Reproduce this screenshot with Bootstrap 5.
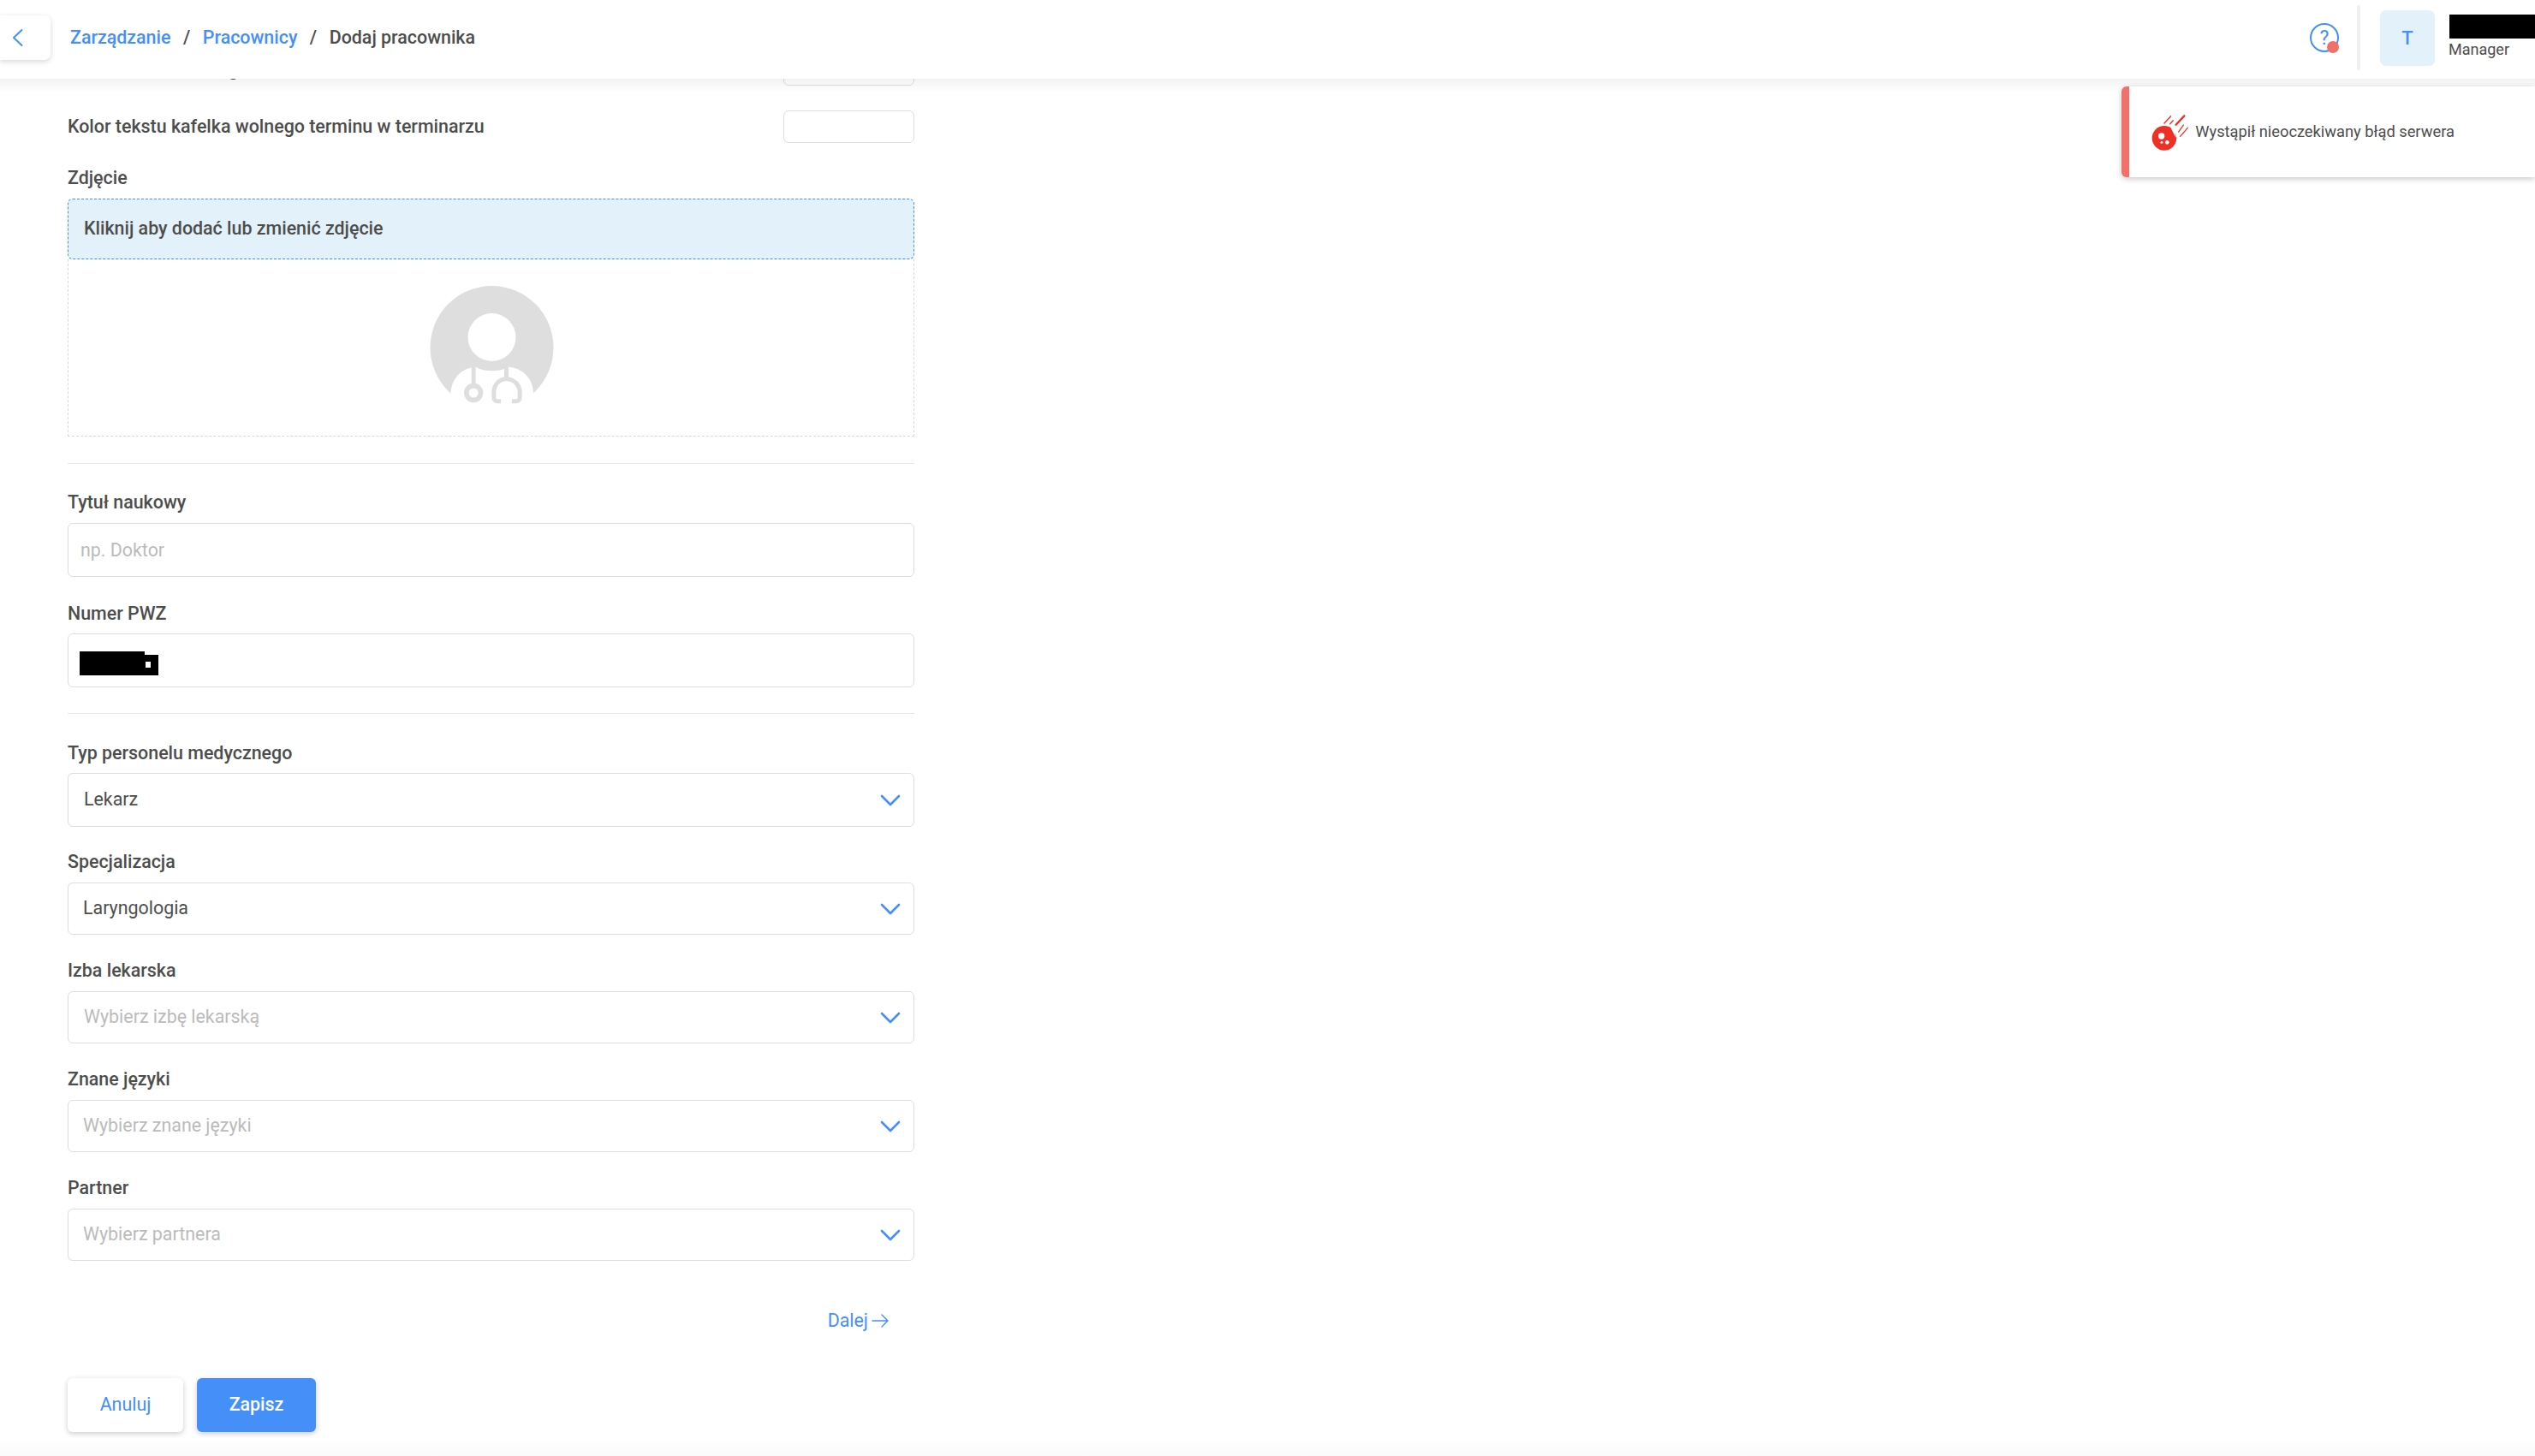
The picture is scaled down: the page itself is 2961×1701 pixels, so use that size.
<!DOCTYPE html>
<html lang="pl">
<head>
<meta charset="utf-8">
<title>Dodaj pracownika</title>
<link href="https://cdn.jsdelivr.net/npm/bootstrap@5.3.0/dist/css/bootstrap.min.css" rel="stylesheet">
<style>
html,body{height:100%}
body{font-family:Roboto,"Liberation Sans",sans-serif;color:#4d4d4d;background:#fff;overflow:hidden;font-size:21.4px}
.shell{height:1701px}
.topbar{height:92px;padding-bottom:4px;background:#fff;position:relative;z-index:5}
.topbar::after{content:"";position:absolute;left:0;right:0;top:100%;height:16px;background:linear-gradient(rgba(0,0,0,.05),rgba(0,0,0,0))}
.backbtn{width:59px;height:52px;background:#fff;border-radius:0 7px 7px 0;box-shadow:0 2px 6px rgba(0,0,0,.16);padding-left:13px}
.topbar .breadcrumb{margin:0 0 0 23px;font-size:21.4px;font-weight:500;--bs-breadcrumb-divider-color:#4d4d4d;--bs-breadcrumb-item-active-color:#4d4d4d;--bs-breadcrumb-item-padding-x:14.5px}
.topbar a,.nextlink{color:#448ff8;text-decoration:none}
.helpbox{margin-right:20px;width:36px;height:36px}
.vsep{width:4px;height:76px;background:#efefef;border-radius:2px}
.avatarbox{width:64px;height:65px;background:#e3f1fa;border-radius:7px;margin-left:23px;color:#448ff8;font-size:22px;font-weight:500}
.userbox{margin-left:16px;width:101px;align-self:flex-start;padding-top:11px}
.redact{height:28px;margin-left:1px;background:#000}
.rolename{font-size:18px;line-height:26px}
.alertbox{position:absolute;top:101px;right:0;width:483px;height:106px;background:#fff;border-left:9px solid #f0706a;border-radius:6px 0 0 6px;box-shadow:0 2px 7px rgba(0,0,0,.22);z-index:6;padding-left:26px;font-size:18.3px}
.formarea{height:1588px;overflow:hidden}
.formcol{width:989px;margin-left:79px;margin-top:-30px}
.colorrow{height:38px;margin-bottom:29px}
.colorrow span{font-size:21.4px;font-weight:500}
.swatch{width:153px;height:38px;border:1px solid #ddd;border-radius:6px;background:#fff}
.fieldlabel{display:block;font-size:21.4px;font-weight:500;line-height:24px;margin:0}
.uploadhead{height:71px;margin-top:12px;background:#e3f1fa;border:1px dashed #448ff8;border-radius:6px;padding-left:18px;font-size:21.4px;font-weight:500}
.uploadbody{height:207px;border:1px dashed #d8d8d8;border-top:0}
.sepline{margin:0;border:0;border-top:1px solid #e6e6e6;opacity:1}
.form-control.fieldinput{height:63px;border:1px solid #ddd;border-radius:6px;padding:0 14px;font-size:21.4px;color:#4d4d4d;box-shadow:none}
.fieldinput::placeholder{color:#bbb}
.pickbox{height:63px;border:1px solid #ddd;border-radius:6px;padding:0 15px 0 18px;font-size:21.4px}
.pickbox.slim{height:61px;padding-left:17px}
.pickbox.faint{color:#bbb}
.pickbox.faint.wideinset{padding-left:18px}
.hidebox{position:absolute;left:14px;top:21px;width:76px;height:28px;background:#000}
.hidebox::after{content:"";position:absolute;left:76px;top:4px;width:16px;height:24px;background:#000}
.hidenote{position:absolute;left:77px;top:12px;width:6px;height:7px;background:#fff;z-index:1}
.nextlink{font-size:21.4px;margin-right:30px;height:24px}
.nextrow{margin-top:58px}
.btnrow{margin-top:55px}
.btnrow .btn{height:63px;border-radius:6px;font-size:21.4px;border:0;box-shadow:0 2px 6px rgba(0,0,0,.2)}
.cancelbtn{width:135px;background:#fff;color:#448ff8}
.savebtn{width:139px;background:#448ff8;color:#fff;margin-left:16px;font-weight:500}
.bottomfade{height:21px;background:linear-gradient(#fff,#fafafa)}
.gapa{margin-top:31px}.gapb{margin-top:33px}.gapb2{margin-top:34px}.gapc{margin-top:31px}.gapd{margin-top:29px}.gape{margin-top:30px}
.labelgap{margin-top:12px}.labelgap2{margin-top:11px}
</style>
</head>
<body>
<div class="shell d-flex flex-column position-relative">
  <header class="topbar d-flex align-items-center">
    <div class="backbtn d-flex align-items-center">
      <svg width="14" height="24" viewBox="0 0 14 24" fill="none" stroke="#448ff8" stroke-width="2" stroke-linecap="round" stroke-linejoin="round"><path d="M12.5 3 3 12l9.5 9"/></svg>
    </div>
    <nav aria-label="breadcrumb">
      <ol class="breadcrumb">
        <li class="breadcrumb-item"><a href="#">Zarządzanie</a></li>
        <li class="breadcrumb-item"><a href="#">Pracownicy</a></li>
        <li class="breadcrumb-item active" aria-current="page">Dodaj pracownika</li>
      </ol>
    </nav>
    <div class="ms-auto d-flex align-items-center">
      <div class="helpbox">
        <svg width="36" height="36" viewBox="0 0 36 36" fill="none">
          <circle cx="18" cy="18" r="16" stroke="#448ff8" stroke-width="2"/>
          <text x="18" y="25.5" text-anchor="middle" font-family="Roboto,sans-serif" font-size="23" fill="#448ff8">?</text>
          <circle cx="28" cy="29" r="7" fill="#f0706a"/>
        </svg>
      </div>
      <div class="vsep"></div>
      <div class="avatarbox d-flex align-items-center justify-content-center">T</div>
      <div class="userbox">
        <div class="redact"></div>
        <div class="rolename">Manager</div>
      </div>
    </div>
  </header>

  <div class="alertbox d-flex align-items-center">
    <svg width="43.3" height="46.7" viewBox="100 86 130 140" fill="none" class="flex-shrink-0">
      <circle cx="145" cy="177" r="43" fill="#ee3124"/>
      <path d="M166 137c14 6 21 20 20 38-6-10-14-24-20-38Z" fill="#fff"/>
      <circle cx="135" cy="170" r="11" fill="#fff"/>
      <circle cx="155" cy="192" r="7" fill="#fff"/>
      <circle cx="136" cy="192" r="4.5" fill="#fff"/>
      <g stroke="#ee3124" stroke-linecap="round">
        <path stroke-width="4" d="M145 125 168 100"/>
        <path stroke-width="4" d="M165 127 176 115"/>
        <path stroke-width="7" d="M186 130 215 99"/>
        <path stroke-width="4" d="M195 155 212 131"/>
        <path stroke-width="4" d="M201 171 227 141"/>
      </g>
    </svg>
    <span class="ms-2">Wystąpił nieoczekiwany błąd serwera</span>
  </div>

  <main class="formarea">
    <form class="formcol">
      <div class="colorrow d-flex justify-content-between align-items-center">
        <span>Kolor kafelka wolnego terminu w terminarzu</span>
        <div class="swatch"></div>
      </div>
      <div class="colorrow d-flex justify-content-between align-items-center">
        <span>Kolor tekstu kafelka wolnego terminu w terminarzu</span>
        <div class="swatch"></div>
      </div>

      <label class="fieldlabel">Zdjęcie</label>
      <div class="uploadhead d-flex align-items-center">Kliknij aby dodać lub zmienić zdjęcie</div>
      <div class="uploadbody d-flex align-items-center justify-content-center">
        <svg width="270" height="190" viewBox="-4.5 3 810 570">
          <circle cx="402" cy="288" r="216" fill="#dedede"/>
          <circle cx="402" cy="252" r="84" fill="#fff"/>
          <path d="M258 446C262 395 295 360 345 356 375 374 430 374 460 356 510 360 545 395 548 446L548 540H258Z" fill="#fff"/>
          <g fill="none" stroke="#dedede">
            <path stroke-width="15" d="M338 356V425"/>
            <circle cx="338" cy="447" r="25" stroke-width="17"/>
            <path stroke-width="15" d="M453 356V397"/>
            <path stroke-width="15" d="M434 476H420C410 476 409 470 409 460V445C409 418 428 398 453 398 478 398 500 418 500 445V460C500 470 498 476 488 476H472"/>
          </g>
        </svg>
      </div>

      <hr class="sepline gapa">

      <label class="fieldlabel gapb">Tytuł naukowy</label>
      <input class="form-control fieldinput labelgap" type="text" placeholder="np. Doktor">

      <label class="fieldlabel gapc">Numer PWZ</label>
      <div class="position-relative labelgap2">
        <input class="form-control fieldinput" type="text" aria-label="Numer PWZ">
        <div class="hidebox"><span class="hidenote"></span></div>
      </div>

      <hr class="sepline gape">

      <label class="fieldlabel gapb2">Typ personelu medycznego</label>
      <div class="pickbox d-flex align-items-center justify-content-between labelgap2">
        <span>Lekarz</span>
        <svg width="24" height="14" viewBox="0 0 24 14" fill="none" stroke="#448ff8" stroke-width="2.6" stroke-linecap="round" stroke-linejoin="round"><path d="M2 2l10 10L22 2"/></svg>
      </div>

      <label class="fieldlabel gapd">Specjalizacja</label>
      <div class="pickbox slim d-flex align-items-center justify-content-between labelgap">
        <span>Laryngologia</span>
        <svg width="24" height="14" viewBox="0 0 24 14" fill="none" stroke="#448ff8" stroke-width="2.6" stroke-linecap="round" stroke-linejoin="round"><path d="M2 2l10 10L22 2"/></svg>
      </div>

      <label class="fieldlabel gape">Izba lekarska</label>
      <div class="pickbox slim faint wideinset d-flex align-items-center justify-content-between labelgap">
        <span>Wybierz izbę lekarską</span>
        <svg width="24" height="14" viewBox="0 0 24 14" fill="none" stroke="#448ff8" stroke-width="2.6" stroke-linecap="round" stroke-linejoin="round"><path d="M2 2l10 10L22 2"/></svg>
      </div>

      <label class="fieldlabel gape">Znane języki</label>
      <div class="pickbox slim faint d-flex align-items-center justify-content-between labelgap">
        <span>Wybierz znane języki</span>
        <svg width="24" height="14" viewBox="0 0 24 14" fill="none" stroke="#448ff8" stroke-width="2.6" stroke-linecap="round" stroke-linejoin="round"><path d="M2 2l10 10L22 2"/></svg>
      </div>

      <label class="fieldlabel gape">Partner</label>
      <div class="pickbox slim faint d-flex align-items-center justify-content-between labelgap">
        <span>Wybierz partnera</span>
        <svg width="24" height="14" viewBox="0 0 24 14" fill="none" stroke="#448ff8" stroke-width="2.6" stroke-linecap="round" stroke-linejoin="round"><path d="M2 2l10 10L22 2"/></svg>
      </div>

      <div class="nextrow d-flex justify-content-end">
        <a class="nextlink d-flex align-items-center gap-1" href="#">Dalej
          <svg width="20" height="18" viewBox="0 0 20 18" fill="none" stroke="#448ff8" stroke-width="1.4" stroke-linecap="round" stroke-linejoin="round"><path d="M1 9h18M12 2l7 7-7 7"/></svg>
        </a>
      </div>

      <div class="btnrow d-flex">
        <button type="button" class="btn cancelbtn">Anuluj</button>
        <button type="button" class="btn savebtn">Zapisz</button>
      </div>
    </form>
  </main>
  <div class="bottomfade"></div>
</div>
<script src="https://cdn.jsdelivr.net/npm/bootstrap@5.3.0/dist/js/bootstrap.bundle.min.js"></script>
</body>
</html>
